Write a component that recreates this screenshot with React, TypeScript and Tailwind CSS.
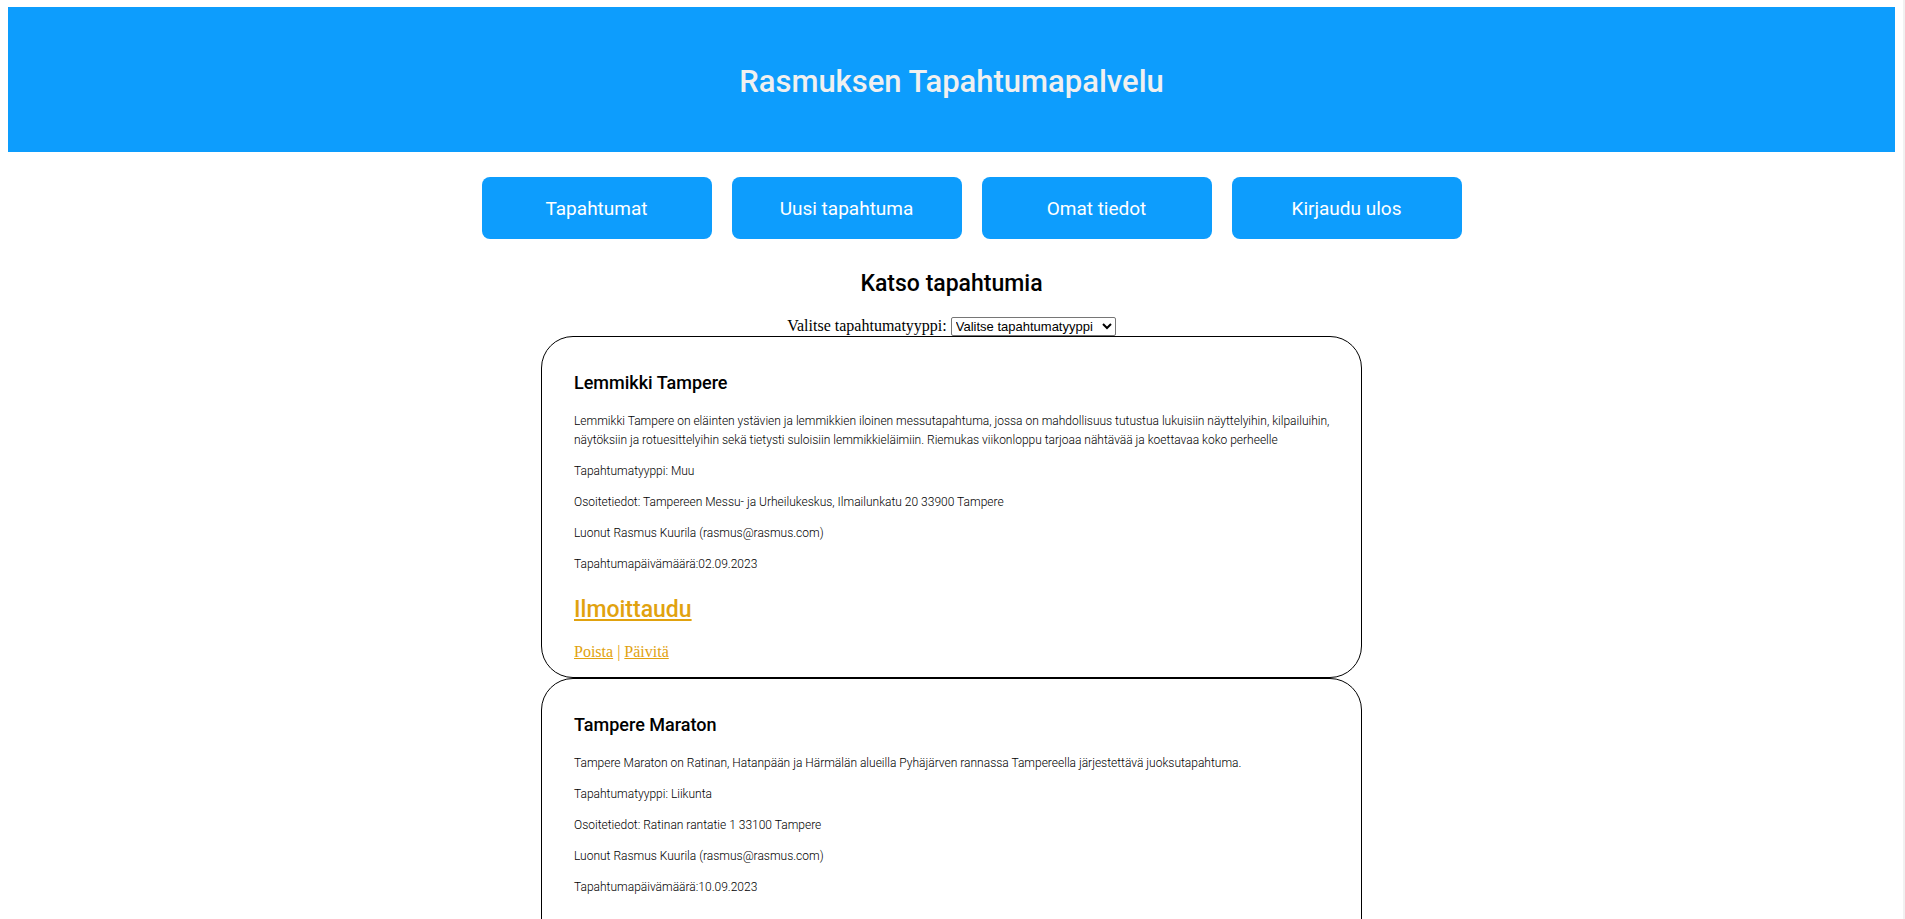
type EventItem = {
  title: string;
  description: string;
  type: string;
  address: string;
  creator: string;
  date: string;
};

const navItems = ["Tapahtumat", "Uusi tapahtuma", "Omat tiedot", "Kirjaudu ulos"];

const events: EventItem[] = [
  {
    title: "Lemmikki Tampere",
    description:
      "Lemmikki Tampere on eläinten ystävien ja lemmikkien iloinen messutapahtuma, jossa on mahdollisuus tutustua lukuisiin näyttelyihin, kilpailuihin, näytöksiin ja rotuesittelyihin sekä tietysti suloisiin lemmikkieläimiin. Riemukas viikonloppu tarjoaa nähtävää ja koettavaa koko perheelle",
    type: "Muu",
    address: "Tampereen Messu- ja Urheilukeskus, Ilmailunkatu 20 33900 Tampere",
    creator: "Rasmus Kuurila (rasmus@rasmus.com)",
    date: "02.09.2023",
  },
  {
    title: "Tampere Maraton",
    description:
      "Tampere Maraton on Ratinan, Hatanpään ja Härmälän alueilla Pyhäjärven rannassa Tampereella järjestettävä juoksutapahtuma.",
    type: "Liikunta",
    address: "Ratinan rantatie 1 33100 Tampere",
    creator: "Rasmus Kuurila (rasmus@rasmus.com)",
    date: "10.09.2023",
  },
];

function EventCard({ event }: { event: EventItem }) {
  return (
    <article className="rounded-[32px] border border-black pt-[35px] pr-5 pb-4 pl-8">
      <h3 className="font-[Roboto,sans-serif] text-lg leading-[22px] font-medium text-black">{event.title}</h3>
      <div className="mt-[18px] flex flex-col gap-3 font-[Roboto,sans-serif] text-xs leading-[19px] font-light text-black">
        <p>{event.description}</p>
        <p>Tapahtumatyyppi: {event.type}</p>
        <p>Osoitetiedot: {event.address}</p>
        <p>Luonut {event.creator}</p>
        <p>Tapahtumapäivämäärä:{event.date}</p>
      </div>
      <h2 className="mt-[21px] font-[Roboto,sans-serif] text-[23px] leading-[30px] font-medium text-[#e1a20e]">
        <a href="#ilmoittaudu" className="underline">Ilmoittaudu</a>
      </h2>
      <p className="mt-[18px] font-['Liberation_Serif',serif] text-base leading-[18px] text-[#e1a20e]">
        <a href="#poista" className="underline">Poista</a> | <a href="#paivita" className="underline">Päivitä</a>
      </p>
    </article>
  );
}

export default function App() {
  return (
    <div className="min-h-screen border-r-2 border-[#f1f1f1] bg-white px-2 py-[7px]">
      <header className="bg-[#0d9dfd] pt-14 pb-[52px] text-center">
        <h1 className="font-[Roboto,sans-serif] text-[31px] leading-[37px] font-medium text-[#f0f0f0]">
          Rasmuksen Tapahtumapalvelu
        </h1>
      </header>
      <nav className="mt-[25px] flex justify-center gap-5 pl-10">
        {navItems.map((item) => (
          <a
            key={item}
            href="#"
            className="w-[230px] rounded-lg bg-[#0d9dfd] pt-[17px] pb-[15px] text-center font-[Roboto,sans-serif] text-[19px] leading-[30px] text-white"
          >
            {item}
          </a>
        ))}
      </nav>
      <main>
        <h2 className="mt-[30px] text-center font-[Roboto,sans-serif] text-[23px] leading-[30px] font-medium text-black">
          Katso tapahtumia
        </h2>
        <form className="mt-[18px] flex items-start justify-center gap-1">
          <label htmlFor="type" className="font-['Liberation_Serif',serif] text-base leading-[18px] text-black">
            Valitse tapahtumatyyppi:
          </label>
          <select
            id="type"
            className="h-[19px] w-[165px] rounded-[2px] border border-[#767676] bg-white font-['Liberation_Sans',sans-serif] text-[13px] text-black"
          >
            <option>Valitse tapahtumatyyppi</option>
            <option>Liikunta</option>
            <option>Muu</option>
          </select>
        </form>
        <section className="mx-auto w-full max-w-[821px]">
          {events.map((event) => (
            <EventCard key={event.title} event={event} />
          ))}
        </section>
      </main>
    </div>
  );
}
